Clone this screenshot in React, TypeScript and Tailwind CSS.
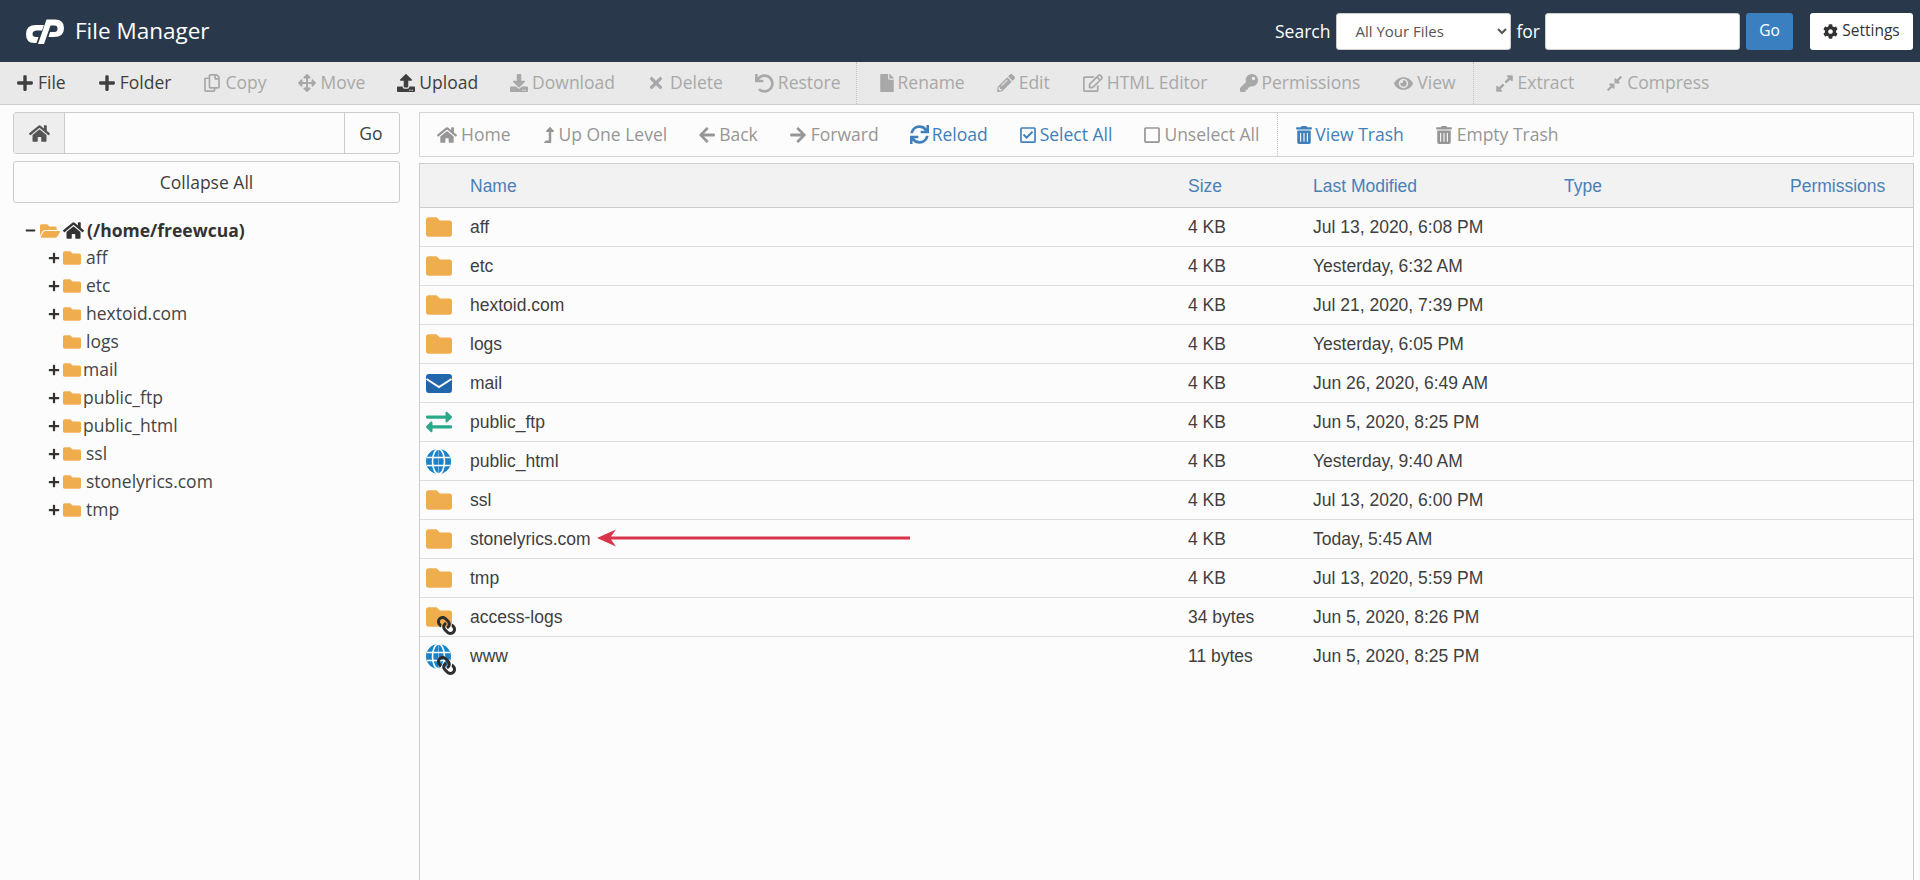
import React from "react";
import {
  FaPlus, FaMinus, FaRegCopy, FaArrowsAlt, FaUpload, FaDownload, FaTimes, FaUndo, FaFile, FaPencilAlt,
  FaRegEdit, FaKey, FaEye, FaExpandAlt, FaCompressAlt, FaHome, FaLevelUpAlt, FaArrowLeft, FaArrowRight,
  FaSync, FaRegCheckSquare, FaRegSquare, FaTrashAlt, FaCog, FaFolder, FaFolderOpen, FaExchangeAlt, FaLink,
} from "react-icons/fa";

type IconT = React.ComponentType<{ size?: number; className?: string }>;

function Tool({
  icon: Icon,
  size = 18,
  label,
  color,
  gap = "gap-[4px]",
  extra = "",
}: {
  icon: IconT;
  size?: number;
  label: string;
  color: string;
  gap?: string;
  extra?: string;
}) {
  return (
    <div className={`flex items-center whitespace-nowrap text-[17.5px] leading-none ${gap} ${extra} ${color}`}>
      <Icon size={size} className="shrink-0" />
      <span>{label}</span>
    </div>
  );
}

const DIS = "text-[#a8a8a8]";
const DARK = "text-[#3f3f3f]";
const BLUE = "text-[#3f80ba]";
const GRY = "text-[#969696]";

function Logo() {
  return (
    <svg width="38" height="25" viewBox="0 0 38 25" fill="#fff" className="shrink-0">
      <path d="M18 6 L16 11.5 H11 Q6.5 11.5 6.5 15 Q6.5 18 10 18 H12.5 L10.5 24 H8 Q0 24 0 15 Q0 6 10 6 Z" />
      <path d="M20.5 0.5 H29 Q38 0.5 38 9 Q38 18 28 18 H22.5 L24 13 H28.5 Q31.5 13 31.5 9.5 Q31.5 6.5 28.5 6.5 H24.5 L18 25 H12 Z" />
    </svg>
  );
}

function Mail() {
  return (
    <svg width="26" height="19" viewBox="0 0 26 19" className="shrink-0">
      <rect width="26" height="19" rx="3" fill="#1f66ad" />
      <path d="M0.5 5 L13 13 L25.5 5" fill="none" stroke="#fff" strokeWidth="2" />
    </svg>
  );
}

function Linked({ children }: { children: React.ReactNode }) {
  return (
    <div className="relative flex">
      {children}
      <FaLink size={19} className="absolute left-[11px] top-[12px] -scale-x-100 text-[#2d2d2d]" />
    </div>
  );
}

const Folder = () => <FaFolder size={26} className="text-[#f0ad4e] shrink-0" />;
const Globe = () => (
  <svg width="25" height="25" viewBox="0 0 25 25" className="shrink-0">
    <circle cx="12.5" cy="12.5" r="12.5" fill="#1a82c9" />
    <ellipse cx="12.5" cy="12.5" rx="6" ry="12.5" fill="none" stroke="#fff" strokeWidth="1.6" />
    <path d="M1 8.5 H24 M1 16.5 H24" fill="none" stroke="#fff" strokeWidth="1.6" />
    <path d="M12.5 0 V25" fill="none" stroke="#fff" strokeWidth="0.4" />
  </svg>
);

const files: { name: string; size: string; date: string; icon: React.ReactNode; arrow?: boolean }[] = [
  { name: "aff", size: "4 KB", date: "Jul 13, 2020, 6:08 PM", icon: <Folder /> },
  { name: "etc", size: "4 KB", date: "Yesterday, 6:32 AM", icon: <Folder /> },
  { name: "hextoid.com", size: "4 KB", date: "Jul 21, 2020, 7:39 PM", icon: <Folder /> },
  { name: "logs", size: "4 KB", date: "Yesterday, 6:05 PM", icon: <Folder /> },
  { name: "mail", size: "4 KB", date: "Jun 26, 2020, 6:49 AM", icon: <Mail /> },
  { name: "public_ftp", size: "4 KB", date: "Jun 5, 2020, 8:25 PM", icon: <FaExchangeAlt size={26} className="text-[#2aa98a] shrink-0" /> },
  { name: "public_html", size: "4 KB", date: "Yesterday, 9:40 AM", icon: <Globe /> },
  { name: "ssl", size: "4 KB", date: "Jul 13, 2020, 6:00 PM", icon: <Folder /> },
  { name: "stonelyrics.com", size: "4 KB", date: "Today, 5:45 AM", icon: <Folder />, arrow: true },
  { name: "tmp", size: "4 KB", date: "Jul 13, 2020, 5:59 PM", icon: <Folder /> },
  { name: "access-logs", size: "34 bytes", date: "Jun 5, 2020, 8:26 PM", icon: <Linked><Folder /></Linked> },
  { name: "www", size: "11 bytes", date: "Jun 5, 2020, 8:25 PM", icon: <Linked><Globe /></Linked> },
];

const tree: { name: string; plus: boolean; tight?: boolean }[] = [
  { name: "aff", plus: true },
  { name: "etc", plus: true },
  { name: "hextoid.com", plus: true },
  { name: "logs", plus: false },
  { name: "mail", plus: true, tight: true },
  { name: "public_ftp", plus: true, tight: true },
  { name: "public_html", plus: true, tight: true },
  { name: "ssl", plus: true },
  { name: "stonelyrics.com", plus: true },
  { name: "tmp", plus: true },
];

const ROW = "grid grid-cols-[50px_718px_125px_251px_226px_1fr] items-center";

export default function App() {
  return (
    <div className="h-screen overflow-hidden flex flex-col bg-[#fcfcfc] font-['Open_Sans',sans-serif] text-[#3f3f3f]">
      <header className="h-[62px] shrink-0 bg-[#29394b] flex items-center pl-[26px] pr-[7px] text-white">
        <Logo />
        <span className="ml-[11px] text-[22.5px] leading-none">File Manager</span>
        <div className="ml-auto flex items-center h-[37px] text-[17.5px]">
          <span>Search</span>
          <select className="ml-[6px] w-[175px] h-[37px] bg-white text-[#555] text-[15px] rounded-[3px] pl-[14px] border border-[#ccc] outline-none">
            <option>All Your Files</option>
          </select>
          <span className="ml-[5px]">for</span>
          <input className="ml-[5px] w-[195px] h-[37px] bg-white rounded-[3px] border border-[#ccc] outline-none" />
          <button className="ml-[6px] w-[47px] h-[37px] bg-[#3a80c0] rounded-[3px] text-[15.5px] text-white">Go</button>
          <button className="ml-[17px] w-[103px] h-[37px] bg-white rounded-[3px] text-[15.5px] text-[#333] flex items-center justify-center gap-[4px]">
            <FaCog size={15} />
            <span>Settings</span>
          </button>
        </div>
      </header>

      <nav className="h-[43px] shrink-0 bg-[#e9e9e9] border-b border-[#cfcfcf] flex">
        <div className="flex items-center gap-[32px] pl-[16px] pr-[15px] border-r border-dotted border-[#c4c4c4]">
          <Tool icon={FaPlus} size={18} label="File" color={DARK} />
          <Tool icon={FaPlus} size={18} label="Folder" color={DARK} />
          <Tool icon={FaRegCopy} label="Copy" color={DIS} />
          <Tool icon={FaArrowsAlt} label="Move" color={DIS} />
          <Tool icon={FaUpload} label="Upload" color={DARK} />
          <Tool icon={FaDownload} label="Download" color={DIS} />
          <Tool icon={FaTimes} label="Delete" color={DIS} gap="gap-[5px]" />
          <Tool icon={FaUndo} size={19} label="Restore" color={DIS} />
        </div>
        <div className="flex items-center gap-[32px] pl-[21px] pr-[17px] border-r border-dotted border-[#c4c4c4]">
          <Tool icon={FaFile} label="Rename" color={DIS} gap="gap-[2px]" />
          <Tool icon={FaPencilAlt} label="Edit" color={DIS} />
          <Tool icon={FaRegEdit} size={20} label="HTML Editor" color={DIS} extra="ml-[1px]" />
          <Tool icon={FaKey} label="Permissions" color={DIS} />
          <Tool icon={FaEye} size={19} label="View" color={DIS} extra="ml-[2px]" />
        </div>
        <div className="flex items-center gap-[32px] pl-[21px]">
          <Tool icon={FaExpandAlt} size={19} label="Extract" color={DIS} />
          <Tool icon={FaCompressAlt} size={17} label="Compress" color={DIS} />
        </div>
      </nav>

      <main className="flex-1 min-h-0 flex pt-[7px] pl-[13px] pr-[6px]">
        <aside className="w-[387px] shrink-0">
          <div className="h-[42px] flex border border-[#ccc] rounded-[3px] bg-[#fcfcfc]">
            <div className="w-[51px] bg-[#eee] border-r border-[#ccc] flex items-center justify-center text-[#555]">
              <FaHome size={21} />
            </div>
            <div className="flex-1" />
            <div className="w-[55px] border-l border-[#ccc] flex items-center justify-center text-[17.5px] pr-[2px]">Go</div>
          </div>
          <button className="mt-[7px] w-full h-[42px] border border-[#ccc] rounded-[3px] text-[17.5px] text-[#3f3f3f]">
            Collapse All
          </button>
          <div className="mt-[14px] text-[17.5px] text-[#444]">
            <div className="h-[27px] flex items-center pl-[12px]">
              <FaMinus size={11} className="text-[#333]" />
              <FaFolderOpen size={20} className="ml-[4px] text-[#f0ad4e]" />
              <FaHome size={21} className="ml-[3px] text-[#333]" />
              <span className="ml-[3px] font-bold text-[#333]">(/home/freewcua)</span>
            </div>
            {tree.map((t) => (
              <div key={t.name} className="h-[28px] flex items-center pl-[35px] leading-none">
                <span className="w-[15px] shrink-0">{t.plus && <FaPlus size={12} className="text-[#333]" />}</span>
                <FaFolder size={18} className="text-[#f0ad4e] shrink-0" />
                <span className={t.tight ? "ml-[2px]" : "ml-[5px]"}>{t.name}</span>
              </div>
            ))}
          </div>
        </aside>

        <section className="ml-[19px] flex-1 min-w-0 flex flex-col">
          <div className="h-[45px] shrink-0 border border-[#d4d4d4] flex">
            <div className="flex items-center gap-[31px] pl-[17px] pr-[18px] border-r border-dotted border-[#c4c4c4]">
              <Tool icon={FaHome} size={20} label="Home" color={GRY} />
              <Tool icon={FaLevelUpAlt} size={16} label="Up One Level" color={GRY} gap="gap-[1px]" />
              <Tool icon={FaArrowLeft} size={18} label="Back" color={GRY} gap="gap-[3px]" />
              <Tool icon={FaArrowRight} size={18} label="Forward" color={GRY} />
              <Tool icon={FaSync} size={19} label="Reload" color={BLUE} gap="gap-[3px]" />
              <Tool icon={FaRegCheckSquare} label="Select All" color={BLUE} gap="gap-[3px]" />
              <Tool icon={FaRegSquare} label="Unselect All" color={GRY} gap="gap-[3px]" />
            </div>
            <div className="flex items-center gap-[31px] pl-[17px]">
              <Tool icon={FaTrashAlt} size={18} label="View Trash" color={BLUE} gap="gap-[2px]" />
              <Tool icon={FaTrashAlt} size={18} label="Empty Trash" color={GRY} />
            </div>
          </div>

          <div className="mt-[6px] flex-1 min-h-0 border-x border-t border-[#ccc] font-['Liberation_Sans',Arial,sans-serif] text-[17.5px] text-[#3f3f3f]">
            <div className={`${ROW} h-[44px] pt-[1px] bg-[#f2f2f2] border-b border-[#ccc] text-[#4a80b8]`}>
              <span />
              <span>Name</span>
              <span>Size</span>
              <span>Last Modified</span>
              <span>Type</span>
              <span>Permissions</span>
            </div>
            {files.map((f, i) => (
              <div
                key={f.name}
                className={`${ROW} relative h-[39px] ${i < files.length - 1 ? "border-b border-[#ddd]" : ""}`}
              >
                <div className="pl-[6px] flex items-center">{f.icon}</div>
                <span>{f.name}</span>
                <span>{f.size}</span>
                <span>{f.date}</span>
                <span />
                <span />
                {f.arrow && (
                  <svg width="314" height="18" viewBox="0 0 314 18" className="absolute left-[177px] top-[9px]">
                    <path d="M0 9 L19 0.5 L14 7.5 H313 V10.5 H14 L19 17.5 Z" fill="#d8344a" />
                  </svg>
                )}
              </div>
            ))}
          </div>
        </section>
      </main>
    </div>
  );
}
